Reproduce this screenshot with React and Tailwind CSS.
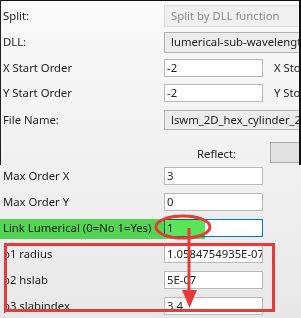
import React from "react";

const font = { fontFamily: '"Noto Sans", "Open Sans", sans-serif' };

function Label({ children }) {
  return <div className="w-[164px] shrink-0 pl-[3px] whitespace-nowrap">{children}</div>;
}

function TextBox({ value, focused }) {
  return (
    <div
      className={
        "w-[99px] h-[18px] shrink-0 bg-white border pl-[2px] flex items-center whitespace-nowrap overflow-hidden " +
        (focused ? "border-[#0078d7]" : "border-[#b9b9b9]")
      }
    >
      {value}
    </div>
  );
}

function Combo({ value, disabled, h }) {
  return (
    <div
      className={
        "w-[150px] shrink-0 border pl-[6px] flex items-center whitespace-nowrap overflow-hidden " +
        (disabled
          ? "bg-[#f0f0f0] border-[#d9d9d9] text-[#8c8c8c]"
          : "bg-[#ececec] border-[#b3b3b3] text-[#222]") +
        " " +
        h
      }
    >
      {value}
    </div>
  );
}

export default function App() {
  return (
    <div
      className="relative w-[301px] h-[318px] overflow-hidden bg-gradient-to-b from-[#fafafa] via-[#f1f1f1] to-[#e8e8e8] text-[11.3px] text-[#222] leading-none"
      style={font}
    >
      <div className="flex flex-col pt-[3px]">
        <div className="flex items-center h-[26px]">
          <Label>Split:</Label>
          <Combo value="Split by DLL function" disabled h="h-[22px]" />
        </div>
        <div className="flex items-center h-[26px]">
          <Label>DLL:</Label>
          <Combo value="lumerical-sub-wavelength-grating" h="h-[21px]" />
        </div>
        <div className="flex items-center h-[25px]">
          <Label>X Start Order</Label>
          <TextBox value="-2" />
          <div className="ml-[11px] whitespace-nowrap">X Stop Order</div>
        </div>
        <div className="flex items-center h-[25px]">
          <Label>Y Start Order</Label>
          <TextBox value="-2" />
          <div className="ml-[11px] whitespace-nowrap">Y Stop Order</div>
        </div>
        <div className="flex items-center h-[29px]">
          <Label>File Name:</Label>
          <Combo value="lswm_2D_hex_cylinder_2a" h="h-[20px]" />
        </div>
        <div className="flex items-start h-[29px]">
          <div className="w-[197px] shrink-0" />
          <div className="mt-[14px] whitespace-nowrap">Reflect:</div>
          <div className="ml-[34px] mt-[8px] w-[60px] h-[21px] shrink-0 bg-[#e1e1e1] border border-[#adadad]" />
        </div>
        <div className="flex items-center h-[26px]">
          <Label>Max Order X</Label>
          <TextBox value="3" />
        </div>
        <div className="flex items-center h-[26px]">
          <Label>Max Order Y</Label>
          <TextBox value="0" />
        </div>
        <div className="relative flex items-center h-[26px]">
          <Label>Link Lumerical (0=No 1=Yes)</Label>
          <TextBox value="1" focused />
          <div className="absolute left-0 top-[4px] w-[205px] h-[20px] bg-[#5ae45a] mix-blend-multiply" />
        </div>
        <div className="flex items-center h-[26px]">
          <Label>p1 radius</Label>
          <TextBox value="1.0584754935E-07" />
        </div>
        <div className="flex items-center h-[26px]">
          <Label>p2 hslab</Label>
          <TextBox value="5E-07" />
        </div>
        <div className="flex items-center h-[26px]">
          <Label>p3 slabindex</Label>
          <TextBox value="3.4" />
        </div>
      </div>

      {/* window frame */}
      <div className="absolute left-0 top-0 w-full h-[1px] bg-[#111]" />
      <div className="absolute left-0 top-0 w-[1px] h-[165px] bg-[#222]" />
      <div className="absolute right-0 top-0 w-[2px] h-[165px] bg-[#111]" />

      {/* annotations */}
      <svg className="absolute left-0 top-0 pointer-events-none" width="301" height="318" viewBox="0 0 301 318">
        <rect x="5.5" y="244.5" width="268" height="66" fill="none" stroke="#e53b3b" strokeWidth="3" />
        <ellipse cx="183" cy="227" rx="27" ry="11" fill="none" stroke="#e53b3b" strokeWidth="3" />
        <line x1="189" y1="228" x2="189" y2="292" stroke="#e53b3b" strokeWidth="3" />
        <polygon points="182,290 197,290 189.5,308" fill="#e53b3b" />
      </svg>
    </div>
  );
}
